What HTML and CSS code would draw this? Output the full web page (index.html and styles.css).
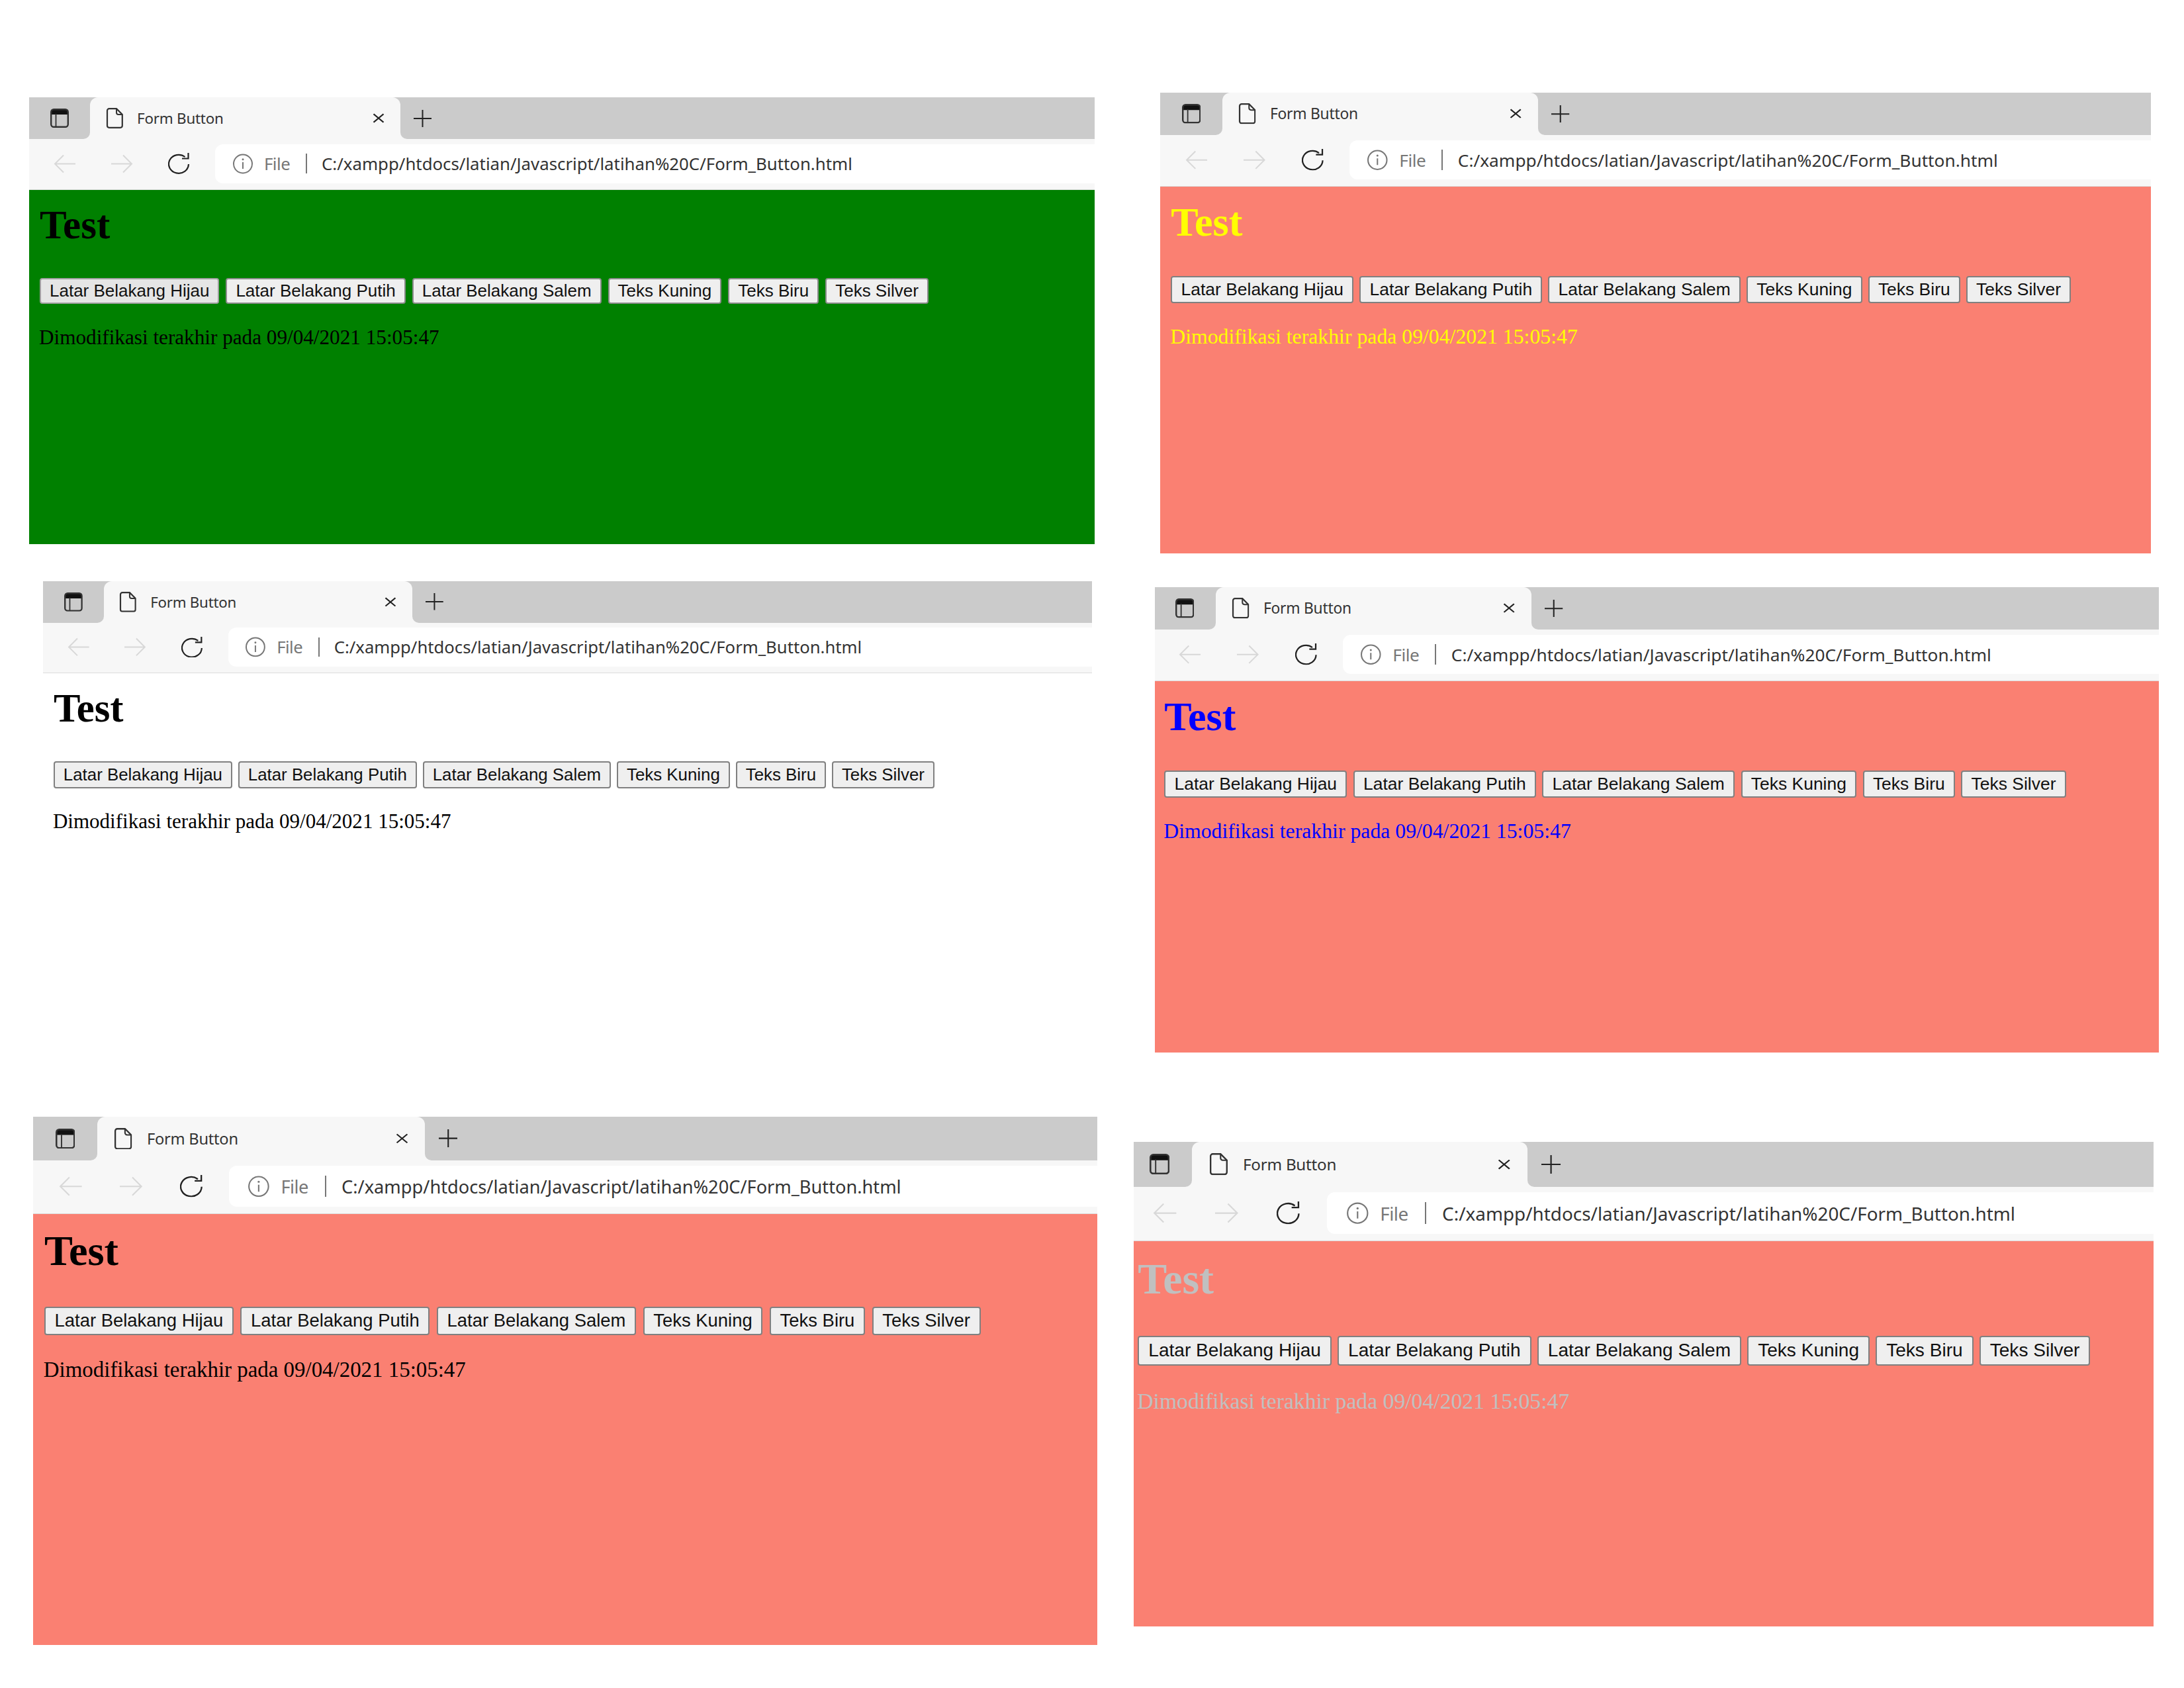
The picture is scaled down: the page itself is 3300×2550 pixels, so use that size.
FILE: index.html
```html
<!DOCTYPE html>
<html lang="id">
<head>
  <meta charset="UTF-8">
  <title>Form Button</title>
  <link rel="stylesheet" href="styles.css">
</head>
<body>
  <svg class="icon-defs" aria-hidden="true">
    <symbol id="ic-sidebar" viewBox="0 0 28 29" preserveAspectRatio="none">
      <path d="M5 1h18a4 4 0 0 1 4 4v4H1V5a4 4 0 0 1 4-4Z" fill="#111"/>
      <rect x="1.2" y="1.2" width="25.6" height="26.6" rx="4" fill="none" stroke="#333" stroke-width="2.4"/>
      <path d="M8.5 8v20" fill="none" stroke="#333" stroke-width="1.8"/>
    </symbol>
    <symbol id="ic-file" viewBox="0 0 26 31" preserveAspectRatio="none">
      <path d="M5 1.2h11L24.8 10v16.8a3 3 0 0 1-3 3H5a3 3 0 0 1-3-3V4.2a3 3 0 0 1 3-3Z" fill="none" stroke="#333" stroke-width="2.2"/>
      <path d="M16 1.2V7a3 3 0 0 0 3 3h5.8" fill="none" stroke="#333" stroke-width="2"/>
    </symbol>
    <symbol id="ic-close" viewBox="0 0 18 18" preserveAspectRatio="none">
      <path d="M1.5 1.5l15 15M16.5 1.5l-15 15" fill="none" stroke="#222" stroke-width="2.2"/>
    </symbol>
    <symbol id="ic-plus" viewBox="0 0 27 26" preserveAspectRatio="none">
      <path d="M13.5 0v26M0 13h27" fill="none" stroke="#222" stroke-width="2"/>
    </symbol>
    <symbol id="ic-back" viewBox="0 0 33 29" preserveAspectRatio="none">
      <path d="M33 14.5H2M15 1.5l-13 13 13 13" fill="none" stroke="#d8d8d8" stroke-width="2"/>
    </symbol>
    <symbol id="ic-forward" viewBox="0 0 33 29" preserveAspectRatio="none">
      <path d="M0 14.5h31M18 1.5l13 13-13 13" fill="none" stroke="#d8d8d8" stroke-width="2"/>
    </symbol>
    <symbol id="ic-reload" viewBox="0 0 34 32" preserveAspectRatio="none">
      <path d="M31 17A15 14 0 1 1 25.5 6" fill="none" stroke="#222" stroke-width="2.2"/>
      <path d="M30.5 0v8.5H21" fill="none" stroke="#222" stroke-width="2.2"/>
    </symbol>
    <symbol id="ic-info" viewBox="0 0 32 31" preserveAspectRatio="none">
      <circle cx="16" cy="15.5" r="14" fill="none" stroke="#777" stroke-width="2"/>
      <path d="M16 13v10" fill="none" stroke="#777" stroke-width="2"/>
      <circle cx="16" cy="8.8" r="1.5" fill="#777"/>
    </symbol>
  </svg>

  <section class="browser win-green">
    <div class="tabstrip">
      <div class="side-btn"><svg class="ic ic-side"><use href="#ic-sidebar"/></svg></div>
      <div class="tab">
        <svg class="ic ic-doc"><use href="#ic-file"/></svg>
        <span class="tab-title">Form Button</span>
        <svg class="ic ic-x"><use href="#ic-close"/></svg>
      </div>
      <div class="strip-rest"><svg class="ic ic-new"><use href="#ic-plus"/></svg></div>
    </div>
    <div class="toolbar">
      <svg class="ic ic-nav"><use href="#ic-back"/></svg>
      <svg class="ic ic-nav ic-fwd"><use href="#ic-forward"/></svg>
      <svg class="ic ic-rel"><use href="#ic-reload"/></svg>
      <div class="address">
        <svg class="ic ic-inf"><use href="#ic-info"/></svg>
        <span class="file-label">File</span>
        <span class="sep"></span>
        <span class="url">C:/xampp/htdocs/latian/Javascript/latihan%20C/Form_Button.html</span>
      </div>
    </div>
    <div class="content">
      <h1>Test</h1>
      <div class="buttons">
        <button class="hovered">Latar Belakang Hijau</button>
        <button>Latar Belakang Putih</button>
        <button>Latar Belakang Salem</button>
        <button>Teks Kuning</button>
        <button>Teks Biru</button>
        <button>Teks Silver</button>
      </div>
      <p>Dimodifikasi terakhir pada 09/04/2021 15:05:47</p>
    </div>
  </section>

  <section class="browser win-yellow">
    <div class="tabstrip">
      <div class="side-btn"><svg class="ic ic-side"><use href="#ic-sidebar"/></svg></div>
      <div class="tab">
        <svg class="ic ic-doc"><use href="#ic-file"/></svg>
        <span class="tab-title">Form Button</span>
        <svg class="ic ic-x"><use href="#ic-close"/></svg>
      </div>
      <div class="strip-rest"><svg class="ic ic-new"><use href="#ic-plus"/></svg></div>
    </div>
    <div class="toolbar">
      <svg class="ic ic-nav"><use href="#ic-back"/></svg>
      <svg class="ic ic-nav ic-fwd"><use href="#ic-forward"/></svg>
      <svg class="ic ic-rel"><use href="#ic-reload"/></svg>
      <div class="address">
        <svg class="ic ic-inf"><use href="#ic-info"/></svg>
        <span class="file-label">File</span>
        <span class="sep"></span>
        <span class="url">C:/xampp/htdocs/latian/Javascript/latihan%20C/Form_Button.html</span>
      </div>
    </div>
    <div class="content">
      <h1>Test</h1>
      <div class="buttons">
        <button>Latar Belakang Hijau</button>
        <button>Latar Belakang Putih</button>
        <button>Latar Belakang Salem</button>
        <button>Teks Kuning</button>
        <button>Teks Biru</button>
        <button>Teks Silver</button>
      </div>
      <p>Dimodifikasi terakhir pada 09/04/2021 15:05:47</p>
    </div>
  </section>

  <section class="browser win-white">
    <div class="tabstrip">
      <div class="side-btn"><svg class="ic ic-side"><use href="#ic-sidebar"/></svg></div>
      <div class="tab">
        <svg class="ic ic-doc"><use href="#ic-file"/></svg>
        <span class="tab-title">Form Button</span>
        <svg class="ic ic-x"><use href="#ic-close"/></svg>
      </div>
      <div class="strip-rest"><svg class="ic ic-new"><use href="#ic-plus"/></svg></div>
    </div>
    <div class="toolbar">
      <svg class="ic ic-nav"><use href="#ic-back"/></svg>
      <svg class="ic ic-nav ic-fwd"><use href="#ic-forward"/></svg>
      <svg class="ic ic-rel"><use href="#ic-reload"/></svg>
      <div class="address">
        <svg class="ic ic-inf"><use href="#ic-info"/></svg>
        <span class="file-label">File</span>
        <span class="sep"></span>
        <span class="url">C:/xampp/htdocs/latian/Javascript/latihan%20C/Form_Button.html</span>
      </div>
    </div>
    <div class="content">
      <h1>Test</h1>
      <div class="buttons">
        <button>Latar Belakang Hijau</button>
        <button>Latar Belakang Putih</button>
        <button>Latar Belakang Salem</button>
        <button>Teks Kuning</button>
        <button>Teks Biru</button>
        <button>Teks Silver</button>
      </div>
      <p>Dimodifikasi terakhir pada 09/04/2021 15:05:47</p>
    </div>
  </section>

  <section class="browser win-blue">
    <div class="tabstrip">
      <div class="side-btn"><svg class="ic ic-side"><use href="#ic-sidebar"/></svg></div>
      <div class="tab">
        <svg class="ic ic-doc"><use href="#ic-file"/></svg>
        <span class="tab-title">Form Button</span>
        <svg class="ic ic-x"><use href="#ic-close"/></svg>
      </div>
      <div class="strip-rest"><svg class="ic ic-new"><use href="#ic-plus"/></svg></div>
    </div>
    <div class="toolbar">
      <svg class="ic ic-nav"><use href="#ic-back"/></svg>
      <svg class="ic ic-nav ic-fwd"><use href="#ic-forward"/></svg>
      <svg class="ic ic-rel"><use href="#ic-reload"/></svg>
      <div class="address">
        <svg class="ic ic-inf"><use href="#ic-info"/></svg>
        <span class="file-label">File</span>
        <span class="sep"></span>
        <span class="url">C:/xampp/htdocs/latian/Javascript/latihan%20C/Form_Button.html</span>
      </div>
    </div>
    <div class="content">
      <h1>Test</h1>
      <div class="buttons">
        <button>Latar Belakang Hijau</button>
        <button>Latar Belakang Putih</button>
        <button>Latar Belakang Salem</button>
        <button>Teks Kuning</button>
        <button>Teks Biru</button>
        <button>Teks Silver</button>
      </div>
      <p>Dimodifikasi terakhir pada 09/04/2021 15:05:47</p>
    </div>
  </section>

  <section class="browser win-black">
    <div class="tabstrip">
      <div class="side-btn"><svg class="ic ic-side"><use href="#ic-sidebar"/></svg></div>
      <div class="tab">
        <svg class="ic ic-doc"><use href="#ic-file"/></svg>
        <span class="tab-title">Form Button</span>
        <svg class="ic ic-x"><use href="#ic-close"/></svg>
      </div>
      <div class="strip-rest"><svg class="ic ic-new"><use href="#ic-plus"/></svg></div>
    </div>
    <div class="toolbar">
      <svg class="ic ic-nav"><use href="#ic-back"/></svg>
      <svg class="ic ic-nav ic-fwd"><use href="#ic-forward"/></svg>
      <svg class="ic ic-rel"><use href="#ic-reload"/></svg>
      <div class="address">
        <svg class="ic ic-inf"><use href="#ic-info"/></svg>
        <span class="file-label">File</span>
        <span class="sep"></span>
        <span class="url">C:/xampp/htdocs/latian/Javascript/latihan%20C/Form_Button.html</span>
      </div>
    </div>
    <div class="content">
      <h1>Test</h1>
      <div class="buttons">
        <button>Latar Belakang Hijau</button>
        <button>Latar Belakang Putih</button>
        <button>Latar Belakang Salem</button>
        <button>Teks Kuning</button>
        <button>Teks Biru</button>
        <button>Teks Silver</button>
      </div>
      <p>Dimodifikasi terakhir pada 09/04/2021 15:05:47</p>
    </div>
  </section>

  <section class="browser win-silver">
    <div class="tabstrip">
      <div class="side-btn"><svg class="ic ic-side"><use href="#ic-sidebar"/></svg></div>
      <div class="tab">
        <svg class="ic ic-doc"><use href="#ic-file"/></svg>
        <span class="tab-title">Form Button</span>
        <svg class="ic ic-x"><use href="#ic-close"/></svg>
      </div>
      <div class="strip-rest"><svg class="ic ic-new"><use href="#ic-plus"/></svg></div>
    </div>
    <div class="toolbar">
      <svg class="ic ic-nav"><use href="#ic-back"/></svg>
      <svg class="ic ic-nav ic-fwd"><use href="#ic-forward"/></svg>
      <svg class="ic ic-rel"><use href="#ic-reload"/></svg>
      <div class="address">
        <svg class="ic ic-inf"><use href="#ic-info"/></svg>
        <span class="file-label">File</span>
        <span class="sep"></span>
        <span class="url">C:/xampp/htdocs/latian/Javascript/latihan%20C/Form_Button.html</span>
      </div>
    </div>
    <div class="content">
      <h1>Test</h1>
      <div class="buttons">
        <button>Latar Belakang Hijau</button>
        <button>Latar Belakang Putih</button>
        <button>Latar Belakang Salem</button>
        <button>Teks Kuning</button>
        <button>Teks Biru</button>
        <button>Teks Silver</button>
      </div>
      <p>Dimodifikasi terakhir pada 09/04/2021 15:05:47</p>
    </div>
  </section>
</body>
</html>
```

FILE: styles.css
```css
body {
  margin: 0;
  width: 3300px;
  height: 2550px;
  position: relative;
  background: #fff;
  overflow: hidden;
}

.icon-defs {
  width: 0;
  height: 0;
  position: absolute;
}

/* each screenshot was pasted at its own size, so --x and --y scale it */
.browser {
  --x: 1;
  --y: 1;
  --btn: 1;
  --gap: 10px;
  --crop: 0px;
  --ux: calc(var(--x) * 1px);
  --uy: calc(var(--y) * 1px);
  position: absolute;
  display: flex;
  flex-direction: column;
  overflow: hidden;
}

.win-green { left: 44px; top: 147px; width: 1610px; height: 675px; }
.win-yellow { left: 1753px; top: 140px; width: 1497px; height: 696px; --x: 1.018; --y: 1.015; --btn: 1.05; --gap: 9px; }
.win-white { left: 65px; top: 878px; width: 1585px; height: 722px; --x: .995; --y: .995; --btn: 1.05; --gap: 9px; }
.win-blue { left: 1745px; top: 887px; width: 1517px; height: 703px; --x: 1.018; --y: 1.015; --btn: 1.05; --gap: 9.5px; --crop: 2px; }
.win-black { left: 50px; top: 1687px; width: 1608px; height: 798px; --x: 1.055; --y: 1.05; --btn: 1.1; --gap: 10.5px; }
.win-silver { left: 1713px; top: 1725px; width: 1541px; height: 732px; --x: 1.08; --y: 1.075; --btn: 1.13; --gap: 9px; --crop: 11px; }

.win-green .content { background: #008000; color: #000; }
.win-yellow .content { background: #fa8072; color: #ff0; }
.win-white .content { background: #fff; color: #000; }
.win-blue .content { background: #fa8072; color: #00f; }
.win-black .content { background: #fa8072; color: #000; }
.win-silver .content { background: #fa8072; color: #c0c0c0; }

.ic {
  display: block;
  flex: none;
}

/* tab strip */
.tabstrip {
  display: flex;
  height: calc(63 * var(--uy));
  flex: none;
  background: linear-gradient(#cbcbcb calc(14 * var(--uy)), #f7f7f7 calc(14 * var(--uy)));
}

.side-btn {
  width: calc(92 * var(--ux) - var(--crop));
  flex: none;
  display: flex;
  align-items: center;
  background: #cbcbcb;
  border-bottom-right-radius: 10px;
  padding-left: calc(32 * var(--ux) - var(--crop));
  box-sizing: border-box;
}

.ic-side {
  width: calc(28 * var(--ux));
  height: calc(29 * var(--uy));
}

.tab {
  width: calc(469 * var(--ux));
  flex: none;
  display: flex;
  align-items: center;
  box-sizing: border-box;
  padding-left: calc(24 * var(--ux));
  background: #f7f7f7;
  border-radius: 12px 12px 0 0;
}

.ic-doc {
  width: calc(26 * var(--ux));
  height: calc(31 * var(--uy));
}

.tab-title {
  margin-left: calc(21 * var(--ux));
  flex: 1;
  font: calc(22.4 * var(--ux)) "Noto Sans", sans-serif;
  letter-spacing: -.01em;
  color: #333;
}

.ic-x {
  width: calc(18 * var(--ux));
  height: calc(15 * var(--uy));
  margin-right: calc(24 * var(--ux));
}

.strip-rest {
  flex: 1;
  display: flex;
  align-items: center;
  background: #cbcbcb;
  border-bottom-left-radius: 10px;
  padding-left: calc(20 * var(--ux));
}

.ic-new {
  width: calc(27 * var(--ux));
  height: calc(26 * var(--uy));
}

/* toolbar */
.toolbar {
  height: calc(77 * var(--uy));
  flex: none;
  box-sizing: border-box;
  display: flex;
  align-items: center;
  padding: 0 0 calc(2 * var(--uy)) calc(37 * var(--ux) - var(--crop));
  background: #f7f7f7;
  border-bottom: 1px solid #dcdcdc;
}

.ic-nav {
  width: calc(33 * var(--ux));
  height: calc(29 * var(--uy));
}

.ic-fwd {
  margin-left: calc(54 * var(--ux));
}

.ic-rel {
  width: calc(34 * var(--ux));
  height: calc(32 * var(--uy));
  margin-left: calc(53 * var(--ux));
}

.address {
  flex: 1;
  height: calc(59 * var(--uy));
  margin-left: calc(37 * var(--ux));
  padding-left: calc(26 * var(--ux));
  display: flex;
  align-items: center;
  background: #fff;
  border-radius: 12px 0 0 12px;
  font-family: "Noto Sans", sans-serif;
  font-size: calc(25.8 * var(--ux));
}

.ic-inf {
  width: calc(32 * var(--ux));
  height: calc(31 * var(--uy));
}

.file-label {
  margin-left: calc(16 * var(--ux));
  width: calc(42 * var(--ux));
  color: #777;
  letter-spacing: -.02em;
}

.sep {
  width: 2px;
  height: calc(30 * var(--uy));
  margin-left: calc(21 * var(--ux));
  background: #777;
}

.url {
  margin-left: calc(22 * var(--ux));
  color: #333;
  white-space: nowrap;
}

/* page inside the window */
.content {
  flex: 1;
  padding: calc(20 * var(--uy)) 0 0 calc(16 * var(--ux) - var(--crop));
}

h1 {
  margin: 0 0 calc(47 * var(--uy));
  height: calc(66 * var(--uy));
  font: bold calc(61 * var(--ux)) / calc(66 * var(--uy)) "Liberation Serif", serif;
}

.buttons {
  display: flex;
  gap: var(--gap);
}

button {
  height: calc(39 * var(--btn) * 1px);
  padding: 0 calc(13 * var(--ux));
  font: calc(26 * var(--ux)) "Liberation Sans", sans-serif;
  color: #111;
  background: #efefef;
  border: 2px solid #808080;
  border-radius: 4px;
  white-space: nowrap;
}

.win-green button {
  border-color: #8c8c8c;
}

button.hovered {
  background: #e5e5e5;
  border-color: #a0a0a0;
}

p {
  margin: calc(32 * var(--uy)) 0 0 calc(-1 * var(--ux));
  font: calc(31.2 * var(--ux)) / calc(38 * var(--uy)) "Liberation Serif", serif;
  white-space: nowrap;
}
```
